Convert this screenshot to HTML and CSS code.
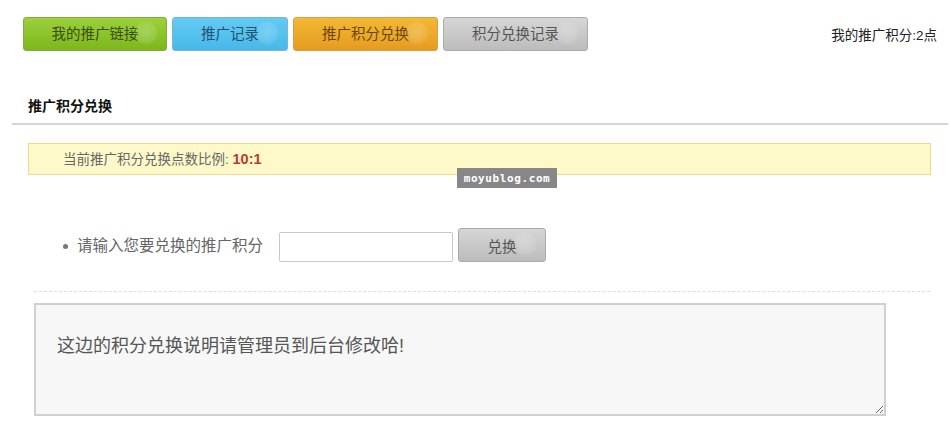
FILE: index.html
```html
<!DOCTYPE html>
<html>
<head>
    <title>推广积分兑换</title>
    <link rel="stylesheet" href="styles.css">
</head>
<body>
    <div class="topbar">
        <div class="tabs">
            <a class="tab green" href="#">我的推广链接</a>
            <a class="tab blue" href="#">推广记录</a>
            <a class="tab orange" href="#">推广积分兑换</a>
            <a class="tab gray" href="#">积分兑换记录</a>
        </div>
        <div class="mypoints">我的推广积分:2点</div>
    </div>

    <h3 class="title">推广积分兑换</h3>

    <div class="notice">当前推广积分兑换点数比例: <b>10:1</b></div>
    <div class="watermark">moyublog.com</div>

    <ul class="form">
        <li>
            <span class="label">请输入您要兑换的推广积分</span>
            <input type="text" class="points">
            <button class="btn">兑换</button>
        </li>
    </ul>

    <textarea class="desc">这边的积分兑换说明请管理员到后台修改哈!</textarea>
</body>
</html>
```

FILE: styles.css
```css
body {
    margin: 0;
    background-color: #ffffff;
    font-family: "Liberation Sans", "Noto Sans CJK SC", sans-serif;
    color: #333;
    position: relative;
    height: 434px;
    overflow: hidden;
}

.topbar {
    display: flex;
    justify-content: space-between;
    align-items: center;
    padding: 17px 13px 0 23px;
}

.tabs {
    display: flex;
    gap: 5px;
}

.tab {
    position: relative;
    display: block;
    height: 32px;
    line-height: 32px;
    text-align: center;
    font-size: 14.5px;
    text-decoration: none;
    border-radius: 3px;
    border: 1px solid;
    overflow: hidden;
}

.tab::after,
.btn::after {
    content: "";
    position: absolute;
    top: 3px;
    right: 8px;
    width: 24px;
    height: 24px;
    border-radius: 50%;
    background: radial-gradient(circle, rgba(255,255,255,0.22), rgba(255,255,255,0.1) 60%, rgba(255,255,255,0) 72%);
}

.green {
    width: 142px;
    background: linear-gradient(#9bd13c, #7db71b);
    border-color: #86ab3c;
    color: #3c4d14;
}

.blue {
    width: 114px;
    background: linear-gradient(#63cbf3, #48b8e9);
    border-color: #78b6d6;
    color: #234f70;
}

.orange {
    width: 143px;
    background: linear-gradient(#f3b834, #e59c20);
    border-color: #d6a04a;
    color: #6a4510;
}

.gray {
    width: 143px;
    background: linear-gradient(#d6d6d6, #bcbcbc);
    border-color: #ababab;
    color: #555;
}

.mypoints {
    font-size: 13.5px;
    color: #222;
}

.title {
    margin: 44px 2px 0 12px;
    padding: 0 0 8px 16px;
    font-size: 14px;
    color: #111;
    border-bottom: 2px solid #d4d4d4;
}

.notice {
    margin: 18px 19px 0 28px;
    height: 30px;
    line-height: 30px;
    padding-left: 34px;
    background-color: #fff9c9;
    border: 1px solid #f2d98a;
    font-size: 13.5px;
    color: #666;
}

.notice b {
    font-size: 14.5px;
    color: #c0392b;
}

.watermark {
    position: absolute;
    left: 457px;
    top: 168px;
    width: 100px;
    height: 20px;
    line-height: 21px;
    text-align: center;
    background-color: #878787;
    color: #fff;
    font-family: "DejaVu Sans Mono", monospace;
    font-size: 11px;
    letter-spacing: 0.6px;
    font-weight: bold;
}

.form {
    margin: 53px 20px 0 34px;
    padding: 0 0 28px 44px;
    border-bottom: 1px dashed #dddddd;
    color: #666;
}

.form li {
    display: flex;
    align-items: flex-start;
    list-style: none;
    font-size: 15.5px;
}

.form li::before {
    content: "";
    display: block;
    width: 5px;
    height: 5px;
    border-radius: 50%;
    background: #777;
    margin: 16px 9px 0 -15px;
}

.label {
    line-height: 34px;
    margin-top: 1px;
    margin-right: 16px;
}

.points {
    width: 168px;
    height: 28px;
    padding: 0 2px;
    margin: 4px 5px 0 0;
    border: 1px solid #c8c8c8;
    border-radius: 2px;
}

.btn {
    position: relative;
    width: 88px;
    height: 34px;
    background: linear-gradient(#d6d6d6, #bcbcbc);
    border: 1px solid #aaa;
    border-radius: 3px;
    font-family: "Liberation Sans", "Noto Sans CJK SC", sans-serif;
    font-size: 14.5px;
    color: #555;
    overflow: hidden;
}

.desc {
    display: block;
    margin: 11px 0 0 34px;
    width: 852px;
    height: 113px;
    box-sizing: border-box;
    padding: 26px 21px;
    background-color: #f7f7f7;
    border: 2px solid #d0d0d0;
    font-family: "Liberation Sans", "Noto Sans CJK SC", sans-serif;
    font-size: 18px;
    color: #555;
}
```
